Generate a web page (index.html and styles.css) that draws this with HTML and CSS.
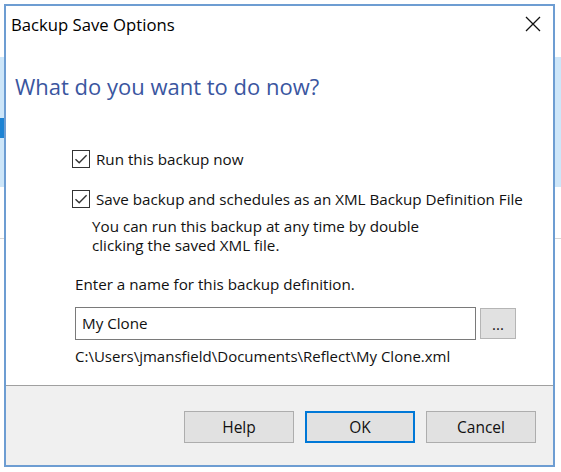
FILE: index.html
```html
<!DOCTYPE html>
<html lang="en">
<head>
<meta charset="utf-8">
<title>Backup Save Options</title>
<link rel="stylesheet" href="styles.css">
</head>
<body>
<div class="dialog">
  <div class="titlebar">
    <span class="title">Backup Save Options</span>
    <span class="close" aria-label="Close">
      <svg width="16" height="16" viewBox="0 0 16 16"><path d="M1 1 L15 15 M15 1 L1 15" stroke="#111" stroke-width="1.3" fill="none"/></svg>
    </span>
  </div>
  <div class="content">
    <h1 class="instruction">What do you want to do now?</h1>
    <div class="options">
      <label class="check">
        <span class="box"><svg width="18" height="18" viewBox="0 0 18 18"><rect x="0.5" y="0.5" width="17" height="17" fill="#fff" stroke="#333"/><path d="M3.5 9.2 L7.2 12.8 L14.6 5.2" stroke="#333" stroke-width="1.4" fill="none"/></svg></span>
        <span>Run this backup now</span>
      </label>
      <label class="check second">
        <span class="box"><svg width="18" height="18" viewBox="0 0 18 18"><rect x="0.5" y="0.5" width="17" height="17" fill="#fff" stroke="#333"/><path d="M3.5 9.2 L7.2 12.8 L14.6 5.2" stroke="#333" stroke-width="1.4" fill="none"/></svg></span>
        <span>Save backup and schedules as an XML Backup Definition File</span>
      </label>
      <p class="note">You can run this backup at any time by double<br>clicking the saved XML file.</p>
    </div>
    <div class="form">
      <p class="prompt">Enter a name for this backup definition.</p>
      <div class="name-row">
        <div class="field">My Clone</div>
        <div class="browse">...</div>
      </div>
      <p class="path">C:\Users\jmansfield\Documents\Reflect\My Clone.xml</p>
    </div>
  </div>
  <div class="footer">
    <div class="btn">Help</div>
    <div class="btn default">OK</div>
    <div class="btn">Cancel</div>
  </div>
</div>
</body>
</html>
```
FILE: styles.css
```css
html, body {
  margin: 0;
  padding: 0;
}
body {
  width: 561px;
  height: 472px;
  overflow: hidden;
  font-family: "Open Sans", "Noto Sans", sans-serif;
  color: #111;
  background:
    linear-gradient(#1c83d4, #1c83d4) 0 118px / 4px 20px no-repeat,
    linear-gradient(to bottom, #fff 0 57px, #cde6f9 57px 187px, #fff 187px 238px, #d6d6d6 238px 239px, #fff 239px) 0 0 / 100% 100% no-repeat;
}
.dialog {
  box-sizing: border-box;
  margin: 4px 0 0 4px;
  width: 551px;
  height: 463px;
  border: 2px solid #6d9dd2;
  background: #fff;
  display: flex;
  flex-direction: column;
}
.titlebar {
  height: 36px;
  display: flex;
  align-items: center;
  justify-content: space-between;
  padding: 0 12px 0 5px;
}
.title {
  font-size: 16.7px;
  color: #000;
}
.close {
  display: flex;
  width: 16px;
  height: 16px;
}
.content {
  flex: 1;
  padding-left: 9px;
}
.instruction {
  margin: 29px 0 0 0;
  font-weight: 400;
  font-size: 22px;
  line-height: 30px;
  color: #3a569f;
}
.options {
  margin: 47px 0 0 57px;
}
.check {
  display: flex;
  align-items: center;
  gap: 6px;
  height: 22px;
  font-size: 15.2px;
}
.box {
  display: flex;
  width: 18px;
  height: 18px;
}
.check.second {
  margin-top: 18px;
}
.note {
  margin: 7px 0 0 20px;
  font-size: 15.2px;
  line-height: 19px;
}
.form {
  margin-left: 60px;
}
.prompt {
  margin: 19px 0 0 0;
  font-size: 15.2px;
  line-height: 20px;
}
.name-row {
  margin-top: 13px;
  display: flex;
  align-items: center;
  gap: 4px;
}
.field {
  box-sizing: border-box;
  width: 401px;
  height: 33px;
  border: 1px solid #7a7a7a;
  padding-left: 6px;
  font-size: 15.2px;
  line-height: 31px;
  background: #fff;
}
.browse {
  box-sizing: border-box;
  width: 36px;
  height: 31px;
  border: 1px solid #b5b5b5;
  background: #e1e1e1;
  text-align: center;
  font-size: 15px;
  line-height: 31px;
}
.path {
  margin: 6px 0 0 0;
  font-size: 15px;
  line-height: 20px;
}
.footer {
  box-sizing: border-box;
  height: 80px;
  border-top: 1px solid #a0a0a0;
  background: #f0f0f0;
  display: flex;
  justify-content: flex-end;
  align-items: flex-start;
  gap: 11px;
  padding: 25px 17px 0 0;
}
.btn {
  box-sizing: border-box;
  width: 110px;
  height: 32px;
  border: 1px solid #adadad;
  background: #e1e1e1;
  text-align: center;
  font-size: 15.5px;
  line-height: 30px;
}
.btn.default {
  border: 2px solid #0078d7;
  line-height: 28px;
}
```
